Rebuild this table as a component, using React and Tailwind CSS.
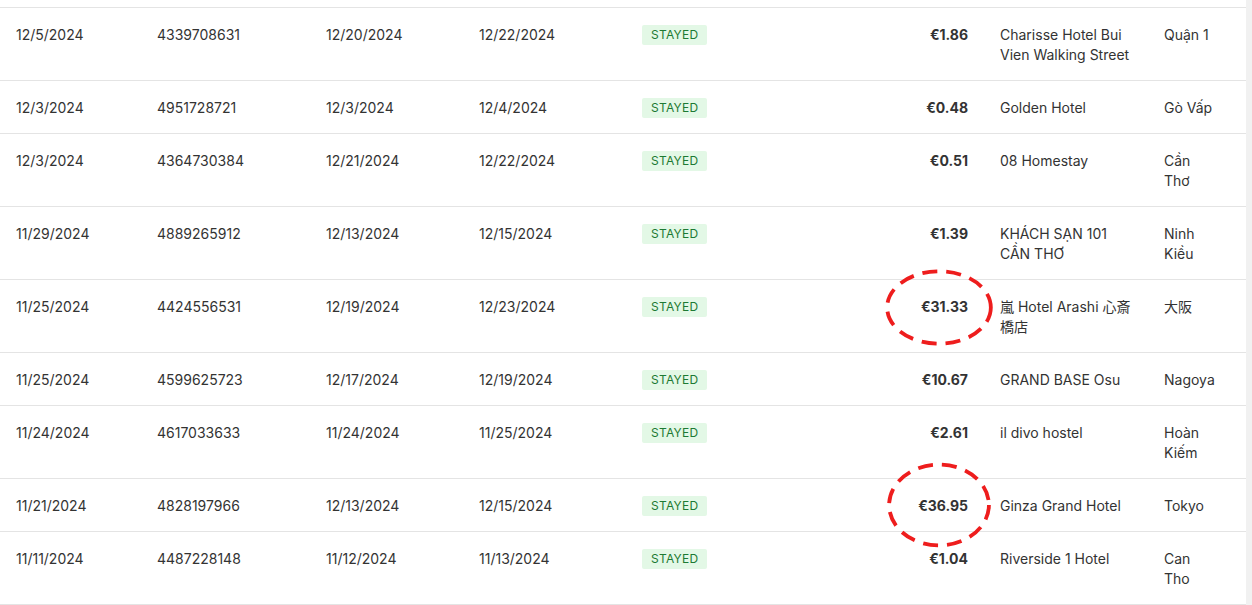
import React from 'react';

const ROWS = [
  { booked: '12/5/2024', id: '4339708631', checkIn: '12/20/2024', checkOut: '12/22/2024', amount: '€1.86', hotel: 'Charisse Hotel Bui Vien Walking Street', city: 'Quận 1' },
  { booked: '12/3/2024', id: '4951728721', checkIn: '12/3/2024', checkOut: '12/4/2024', amount: '€0.48', hotel: 'Golden Hotel', city: 'Gò Vấp' },
  { booked: '12/3/2024', id: '4364730384', checkIn: '12/21/2024', checkOut: '12/22/2024', amount: '€0.51', hotel: '08 Homestay', city: 'Cần Thơ' },
  { booked: '11/29/2024', id: '4889265912', checkIn: '12/13/2024', checkOut: '12/15/2024', amount: '€1.39', hotel: 'KHÁCH SẠN 101 CẦN THƠ', city: 'Ninh Kiều' },
  { booked: '11/25/2024', id: '4424556531', checkIn: '12/19/2024', checkOut: '12/23/2024', amount: '€31.33', hotel: '嵐 Hotel Arashi 心斎橋店', city: '大阪', mark: 'a' },
  { booked: '11/25/2024', id: '4599625723', checkIn: '12/17/2024', checkOut: '12/19/2024', amount: '€10.67', hotel: 'GRAND BASE Osu', city: 'Nagoya' },
  { booked: '11/24/2024', id: '4617033633', checkIn: '11/24/2024', checkOut: '11/25/2024', amount: '€2.61', hotel: 'il divo hostel', city: 'Hoàn Kiếm' },
  { booked: '11/21/2024', id: '4828197966', checkIn: '12/13/2024', checkOut: '12/15/2024', amount: '€36.95', hotel: 'Ginza Grand Hotel', city: 'Tokyo', mark: 'b' },
  { booked: '11/11/2024', id: '4487228148', checkIn: '11/12/2024', checkOut: '11/13/2024', amount: '€1.04', hotel: 'Riverside 1 Hotel', city: 'Can Tho' },
];

// hand-drawn-ish red circle around the commission amount
const Ring = ({ variant }) => {
  const box = variant === 'a'
    ? 'top-[-28px] right-[-25px] w-[108px] h-[77px]'
    : 'top-[-34px] right-[-23px] w-[104px] h-[86px]';
  return (
    <svg className={`absolute ${box} pointer-events-none z-10 overflow-visible`} viewBox="0 0 100 100" preserveAspectRatio="none">
      <ellipse
        cx="50" cy="50" rx="48" ry="47"
        fill="none" stroke="#ee1d1d" strokeWidth="3.8"
        vectorEffect="non-scaling-stroke"
        style={{ strokeDasharray: '15 9' }}
      />
    </svg>
  );
};

const Badge = () => (
  <span className="inline-block px-[9px] leading-5 text-xs tracking-[0.02em] text-[#1d7a33] bg-[#e3f8e6] rounded-[2px]">
    STAYED
  </span>
);

export default function App() {
  const td = 'pt-[17px] pb-[15px] px-4 align-top leading-5';
  return (
    <div className="flex bg-white min-h-[605px] text-[14px] text-[#333] font-['Inter','Noto_Sans_CJK_JP',sans-serif]">
      <div className="flex-1">
        <div className="h-[8px] border-b border-[#e4e4e4]" />
        <table className="w-full table-fixed border-collapse">
          <colgroup>
            <col className="w-[141px]" />
            <col className="w-[169px]" />
            <col className="w-[153px]" />
            <col className="w-[163px]" />
            <col className="w-[358px]" />
            <col className="w-[164px]" />
            <col />
          </colgroup>
          <tbody>
            {ROWS.map((r) => (
              <tr key={r.id} className="border-b border-[#e4e4e4]">
                <td className={td}>{r.booked}</td>
                <td className={td}>{r.id}</td>
                <td className={td}>{r.checkIn}</td>
                <td className={td}>{r.checkOut}</td>
                <td className={td}>
                  <div className="flex items-start justify-between">
                    <Badge />
                    <span className="relative font-bold">
                      {r.amount}
                      {r.mark && <Ring variant={r.mark} />}
                    </span>
                  </div>
                </td>
                <td className={td}>{r.hotel}</td>
                <td className={td}>
                  <div className="w-[52px]">{r.city}</div>
                </td>
              </tr>
            ))}
          </tbody>
        </table>
      </div>
      <div className="w-[6px] bg-[#f1f1f1]" />
    </div>
  );
}
